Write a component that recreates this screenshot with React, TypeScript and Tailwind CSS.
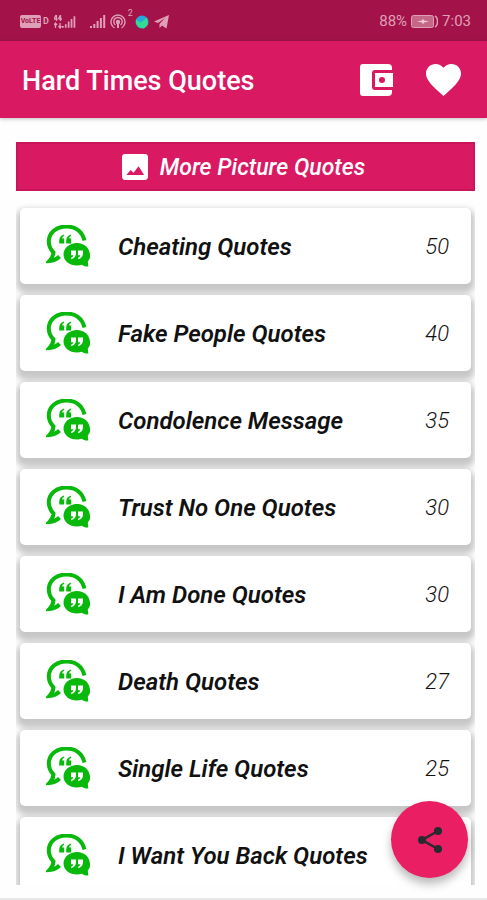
import React from "react";

const quotes = [
  { name: "Cheating Quotes", count: 50 },
  { name: "Fake People Quotes", count: 40 },
  { name: "Condolence Message", count: 35 },
  { name: "Trust No One Quotes", count: 30 },
  { name: "I Am Done Quotes", count: 30 },
  { name: "Death Quotes", count: 27 },
  { name: "Single Life Quotes", count: 25 },
  { name: "I Want You Back Quotes", count: null },
];

function Signal({ className }: { className: string }) {
  return (
    <svg viewBox="0 0 16 13" className={className} fill="currentColor" aria-hidden="true">
      <path d="M0 11h2v2H0zM3.3 9h2v4h-2zM6.6 6h2v7h-2zM9.9 3h2v10h-2zM13.2 0h2v13h-2z" />
    </svg>
  );
}

function QuoteIcon() {
  return (
    <svg viewBox="0 0 44 44" className="h-11 w-11 shrink-0" aria-hidden="true">
      <path
        d="M38.500 15.500C36 6 29 1.500 20.500 1.500 10 1.500 2.800 8 2.800 16.500 2.800 21 4.600 24.500 7.500 27.500 7 31.500 5.500 34 3.500 36 8 35.700 10.500 34.500 13.500 31.500"
        fill="none"
        stroke="#08b90b"
        strokeWidth="4"
      />
      <path
        d="M31 18C23.500 18 17.500 23 17.500 29.500S23.500 40.500 31 40.500c1.700 0 3.300-.2 4.800-.7 2 1.500 4.200 2 6.500 1.700l-.5-5c1.700-1.900 2.700-4.300 2.200-7C43.500 23 38.500 18 31 18z"
        fill="#08b90b"
      />
      <path
        d="M18 9.500c-3.200.8-4.800 3.200-4.800 6.500v2.500h5v-5h-2c.1-1.300.8-2 2-2.400zM25 9.500c-3.200.8-4.800 3.200-4.800 6.500v2.500h5v-5h-2c.1-1.300.8-2 2-2.400z"
        fill="#08b90b"
      />
      <path
        d="M25 25.500h5v2.500c0 3.200-1.600 5.400-4.800 6.200v-1.600c1.200-.4 1.800-1.100 2-2.300H25zM32 25.500h5v2.500c0 3.200-1.600 5.400-4.800 6.200v-1.600c1.200-.4 1.800-1.100 2-2.300H32z"
        fill="#fff"
      />
    </svg>
  );
}

function StatusBar() {
  return (
    <div className="flex h-[41px] shrink-0 items-center bg-[#a31349] pt-[2px] pr-4 pl-5 text-[#dfa0b7]">
      <div className="flex flex-1 items-center">
        <span className="flex h-[13px] w-[21px] items-center justify-center overflow-hidden rounded-xs bg-[#dfa0b7] text-[7px] font-bold text-[#a31349]">
          VoLTE
        </span>
        <span className="ml-[2px] text-[9px] font-bold">D</span>
        <svg viewBox="0 0 8 14" className="ml-[5px] h-[14px] w-2" fill="none" stroke="currentColor" strokeWidth="1.300" aria-hidden="true">
          <path d="M2.500 0v6M0 4h3.500M0 4l2-4M6.500 0v6M4.500 4h3.500M4.500 4l2-4M1.500 8v5M0 10l1.500-2L3 10M6 8v5M4.500 11L6 13l1.500-2" />
        </svg>
        <Signal className="h-3 w-[14px]" />
        <Signal className="ml-[14px] h-[13px] w-4" />
        <svg viewBox="0 0 16 16" className="ml-1 h-4 w-4" fill="none" stroke="currentColor" strokeWidth="1.400" aria-hidden="true">
          <path d="M4.500 14A7 7 0 1 1 11.500 14M5.500 11A4.200 4.200 0 1 1 10.500 11" />
          <circle cx="8" cy="8" r="1.500" fill="currentColor" />
          <path d="M8 9v5" strokeWidth="2" />
        </svg>
        <span className="mb-4 ml-[2px] text-[9px] leading-none">2</span>
        <svg viewBox="0 0 14 14" className="ml-[2px] h-[14px] w-[14px]" aria-hidden="true">
          <circle cx="7" cy="7" r="6.500" fill="#26a6dc" />
          <path d="M1 4.500l5 3 6-5 1 7-4 4-5-1-3-4z" fill="#32dc93" />
        </svg>
        <svg viewBox="0 0 15 14" className="ml-[5px] h-[14px] w-[15px]" fill="currentColor" aria-hidden="true">
          <path d="M15 0L0 6.500 4 8l7-5-5.500 6v4L8 10.500l4.500 3z" />
        </svg>
      </div>
      <div className="flex items-center text-[15px]">
        <span>88%</span>
        <svg viewBox="0 0 27 13" className="mx-1 h-[13px] w-[27px]" aria-hidden="true">
          <rect x=".5" y=".5" width="22" height="12" rx="2" fill="#c56888" stroke="#dfa0b7" />
          <path d="M24 1c2 1 2.500 3 2.500 5.500S26 11 24 12" fill="none" stroke="#dfa0b7" strokeWidth="1.500" />
          <path d="M6 6.500l5-1 1-2 1 2 5 1-5 1-1 2-1-2z" fill="#f0cad7" />
        </svg>
        <span>7:03</span>
      </div>
    </div>
  );
}

export default function App() {
  return (
    <div className="relative flex h-screen flex-col overflow-hidden border-b-2 border-[#e8e8e8] bg-[#fefefe] font-['Roboto',sans-serif]">
      <StatusBar />
      <header className="flex h-[77px] shrink-0 items-center bg-[#da1963] pr-[26px] pl-[22px] text-white shadow-[0_1px_4px_rgba(0,0,0,0.25)]">
        <h1 className="flex-1 pt-1 text-[27px] font-medium">Hard Times Quotes</h1>
        <button type="button" aria-label="Collection" className="mr-8">
          <svg viewBox="0 0 35 34" className="h-[34px] w-[35px]" aria-hidden="true">
            <path d="M4 1h25a4 4 0 0 1 4 4v24a4 4 0 0 1-4 4H4a3 3 0 0 1-3-3V4a3 3 0 0 1 3-3z" fill="#fff" />
            <path d="M35 7H16a3 3 0 0 0-3 3v14a3 3 0 0 0 3 3h19z" fill="#da1963" />
            <rect x="16" y="10" width="18" height="14" fill="#fff" />
            <circle cx="23" cy="17" r="3" fill="#da1963" />
          </svg>
        </button>
        <button type="button" aria-label="Favourites">
          <svg viewBox="2 3 20 18.350" preserveAspectRatio="none" className="h-8 w-[35px]" fill="currentColor" aria-hidden="true">
            <path d="M12 21.350l-1.450-1.320C5.400 15.360 2 12.280 2 8.500 2 5.420 4.420 3 7.500 3c1.740 0 3.410.81 4.500 2.090C13.090 3.810 14.760 3 16.500 3 19.580 3 22 5.420 22 8.500c0 3.780-3.400 6.860-8.550 11.540z" />
          </svg>
        </button>
      </header>

      <main className="flex min-h-0 flex-1 flex-col pt-6 pr-3 pb-[13px] pl-4">
        <button
          type="button"
          className="flex h-[49px] w-full shrink-0 items-center justify-center gap-3 border-2 border-[#c81458] bg-[#da1963] pr-1 text-[23px] leading-8 font-medium text-white italic"
        >
          <svg viewBox="3 3 18 18" className="h-[26px] w-[26px]" fill="currentColor" aria-hidden="true">
            <path d="M21 19V5c0-1.100-.9-2-2-2H5c-1.100 0-2 .9-2 2v14c0 1.100.9 2 2 2h14c1.100 0 2-.9 2-2zM6 17.500l3-3.500 2 2 3.500-4.500 3.800 6z" />
          </svg>
          <span className="pt-[2px]">More Picture Quotes</span>
        </button>

        <ul className="mt-[11px] flex min-h-0 flex-1 flex-col gap-[11px] overflow-hidden px-1 pt-[6px]">
          {quotes.map((quote) => (
            <li
              key={quote.name}
              className="h-[76px] shrink-0 rounded-[5px] bg-white shadow-[0_5px_6px_4px_rgba(0,0,0,0.22)]"
            >
              <a href="#quotes" className="flex h-full items-center pt-[2px] pr-[22px] pl-[26px] text-2xl text-[#111] italic">
                <QuoteIcon />
                <span className="ml-7 flex-1 font-semibold">{quote.name}</span>
                {quote.count !== null && <span className="text-[22px] font-light">{quote.count}</span>}
              </a>
            </li>
          ))}
        </ul>
      </main>

      <button
        type="button"
        aria-label="Share"
        className="absolute right-[19px] bottom-5 flex h-[77px] w-[77px] items-center justify-center rounded-full bg-[#e91e63] text-[#252b2e] shadow-[0_6px_10px_rgba(0,0,0,0.28)]"
      >
        <svg viewBox="0 0 26 28" className="h-7 w-[26px]" fill="currentColor" aria-hidden="true">
          <path d="M21 5L5 14l16 9" fill="none" stroke="currentColor" strokeWidth="2.500" />
          <circle cx="21" cy="5" r="4" />
          <circle cx="5" cy="14" r="4" />
          <circle cx="21" cy="23" r="4" />
        </svg>
      </button>
    </div>
  );
}
